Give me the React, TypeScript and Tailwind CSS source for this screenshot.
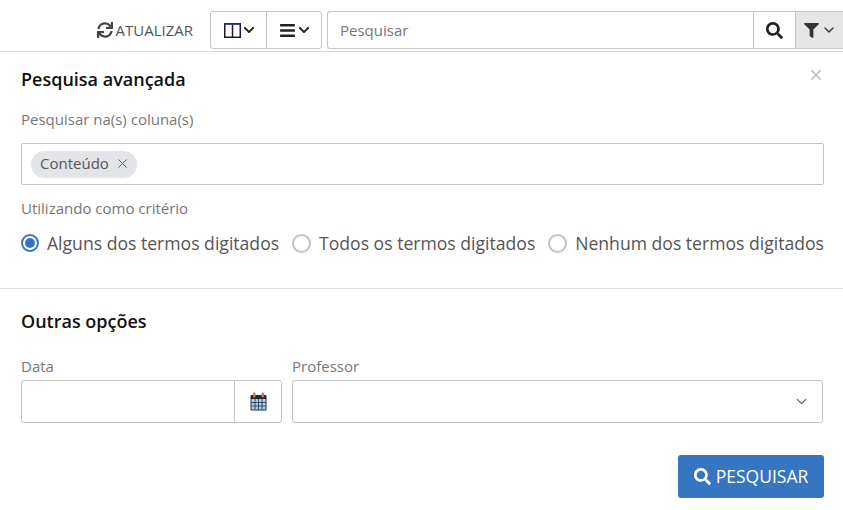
import { FaChevronDown, FaFilter, FaSearch, FaSync, FaBars } from 'react-icons/fa';
import { ChevronDown, X } from 'lucide-react';

const CRITERIA = ['Alguns dos termos digitados', 'Todos os termos digitados', 'Nenhum dos termos digitados'];

function ColumnsIcon() {
  return (
    <svg width="17" height="15" viewBox="0 0 17 15" fill="none">
      <rect x="0.75" y="0.75" width="15.5" height="13.5" stroke="#1a1a3a" strokeWidth="1.5" />
      <line x1="8.5" y1="1" x2="8.5" y2="14" stroke="#1a1a3a" strokeWidth="1.5" />
      <line x1="1" y1="1" x2="16" y2="1" stroke="#1f3f8f" strokeWidth="1.5" />
    </svg>
  );
}

function CalendarIcon() {
  return (
    <svg width="17" height="19" viewBox="0 0 17 19">
      <rect x="0.5" y="3" width="16" height="15.5" rx="1" fill="#1c2a3a" />
      <rect x="1.5" y="7" width="14" height="10.5" fill="#a9d4ee" />
      <path d="M5 7v10.5M8.5 7v10.5M12 7v10.5M1.5 10.5h14M1.5 14h14" stroke="#1c2a3a" strokeWidth="0.8" />
      <rect x="3" y="0.5" width="2.5" height="5" rx="1" fill="#c77a3a" />
      <rect x="11.5" y="0.5" width="2.5" height="5" rx="1" fill="#c77a3a" />
    </svg>
  );
}

export default function App() {
  return (
    <div className="w-[843px] h-[510px] bg-white overflow-hidden font-['Open_Sans',sans-serif] text-[#555]">
      {/* Toolbar */}
      <div className="h-[52px] border-b border-[#d8d8d8] flex items-start justify-end pt-[11px]">
        <div className="flex items-center h-[38px] mr-[17px] text-[15px] text-[#555]">
          <FaSync className="text-[16px] mr-[2px] text-[#444]" />
          <span>ATUALIZAR</span>
        </div>
        <div className="flex h-[38px] border border-[#c4c4c4] rounded-[3px] mr-[5px]">
          <div className="w-[56px] flex items-center justify-center gap-[2px] pl-[1px] border-r border-[#c4c4c4]">
            <ColumnsIcon />
            <FaChevronDown className="text-[12px] text-[#222]" />
          </div>
          <div className="w-[54px] flex items-center justify-center gap-[2px]">
            <FaBars className="text-[17px] text-[#222]" />
            <FaChevronDown className="text-[12px] text-[#222]" />
          </div>
        </div>
        <div className="flex h-[38px] w-[516px] border border-r-0 border-[#c4c4c4] rounded-l-[3px]">
          <div className="flex-1 flex items-center pl-[12px] text-[15px] text-[#777]">Pesquisar</div>
          <div className="w-[42px] flex items-center justify-center border-l border-[#c4c4c4]">
            <FaSearch className="text-[17px] text-[#222]" />
          </div>
          <div className="w-[48px] flex items-center justify-center gap-[2px] pl-[2px] border-l border-[#c4c4c4] bg-[#e6e6e6]">
            <FaFilter className="text-[15px] text-[#333]" />
            <ChevronDown size={16} strokeWidth={2} className="text-[#333]" />
          </div>
        </div>
      </div>

      {/* Pesquisa avançada */}
      <div className="pl-[21px] pr-[19px] relative">
        <X size={16} strokeWidth={3} className="absolute right-[19px] top-[15px] text-[#c8c8c8]" />
        <h2 className="text-[18px] font-semibold text-[#111] leading-[22px] pt-[16px]">Pesquisa avançada</h2>
        <div className="text-[15px] text-[#777] leading-[20px] mt-[19px]">Pesquisar na(s) coluna(s)</div>
        <div className="h-[42px] mt-[14px] border border-[#c4c4c4] rounded-[2px] flex items-center pl-[9px]">
          <div className="h-[27px] flex items-center gap-[6px] rounded-full bg-[#e3e4e8] pl-[9px] pr-[7px] pb-[2px] text-[15px] leading-[20px] text-[#555]">
            Conteúdo
            <X size={15} strokeWidth={1.5} className="text-[#555]" />
          </div>
        </div>
        <div className="text-[15px] text-[#777] leading-[20px] mt-[13px]">Utilizando como critério</div>
        <div className="flex justify-between mt-[13px]">
          {CRITERIA.map((label, i) => (
            <label key={label} className="flex items-center gap-[8px] text-[17.6px] leading-[24px] text-[#555]">
              {i === 0 ? (
                <span className="w-[18px] h-[18px] rounded-full border-2 border-[#3575c2] flex items-center justify-center">
                  <span className="w-[10px] h-[10px] rounded-full bg-[#3575c2]" />
                </span>
              ) : (
                <span className="w-[19px] h-[19px] rounded-full border-2 border-[#c4c4c4]" />
              )}
              {label}
            </label>
          ))}
        </div>
      </div>

      <div className="border-t border-[#e2e2e2] mt-[33px]" />

      {/* Outras opções */}
      <div className="pl-[21px] pr-[19px]">
        <h2 className="text-[18px] font-semibold text-[#111] leading-[22px] mt-[21px]">Outras opções</h2>
        <div className="flex gap-[10px] mt-[24px]">
          <div className="w-[261px]">
            <div className="text-[15px] text-[#777] leading-[20px]">Data</div>
            <div className="h-[43px] mt-[4px] flex border border-[#c4c4c4] rounded-[3px]">
              <div className="flex-1" />
              <div className="w-[47px] flex items-center justify-center border-l border-[#c4c4c4]">
                <CalendarIcon />
              </div>
            </div>
          </div>
          <div className="w-[531px]">
            <div className="text-[15px] text-[#777] leading-[20px]">Professor</div>
            <div className="h-[43px] mt-[4px] flex items-center justify-end pr-[12px] border border-[#c4c4c4] rounded-[3px]">
              <ChevronDown size={17} strokeWidth={1.75} className="text-[#666]" />
            </div>
          </div>
        </div>
        <div className="flex justify-end mt-[32px]">
          <button className="w-[146px] h-[43px] bg-[#3575c2] text-white rounded-[3px] flex items-center justify-center gap-[5px] text-[17.5px]">
            <FaSearch className="text-[17px]" />
            PESQUISAR
          </button>
        </div>
      </div>
    </div>
  );
}
